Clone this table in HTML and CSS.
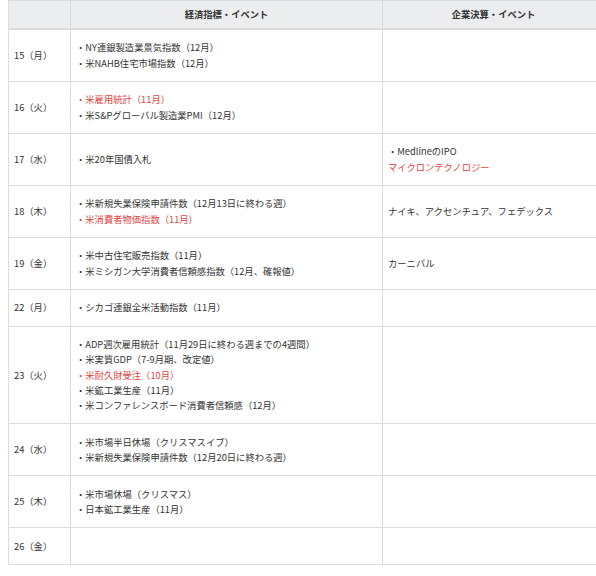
FILE: index.html
```html
<!DOCTYPE html>
<html lang="ja">
<head>
<meta charset="utf-8">
<link rel="stylesheet" href="styles.css">
</head>
<body>
<table class="cal">
  <colgroup>
    <col class="c-date">
    <col class="c-eco">
    <col class="c-corp">
  </colgroup>
  <thead>
    <tr>
      <th></th>
      <th>経済指標・イベント</th>
      <th>企業決算・イベント</th>
    </tr>
  </thead>
  <tbody>
    <tr>
      <td class="date">15（月）</td>
      <td><div>・NY連銀製造業景気指数（12月）</div><div>・米NAHB住宅市場指数（12月）</div></td>
      <td></td>
    </tr>
    <tr>
      <td class="date">16（火）</td>
      <td><div class="red">・米雇用統計（11月）</div><div>・米S&amp;Pグローバル製造業PMI（12月）</div></td>
      <td></td>
    </tr>
    <tr>
      <td class="date">17（水）</td>
      <td><div>・米20年国債入札</div></td>
      <td><div>・MedlineのIPO</div><div class="red">マイクロンテクノロジー</div></td>
    </tr>
    <tr>
      <td class="date">18（木）</td>
      <td><div>・米新規失業保険申請件数（12月13日に終わる週）</div><div class="red">・米消費者物価指数（11月）</div></td>
      <td><div>ナイキ、アクセンチュア、フェデックス</div></td>
    </tr>
    <tr>
      <td class="date">19（金）</td>
      <td><div>・米中古住宅販売指数（11月）</div><div>・米ミシガン大学消費者信頼感指数（12月、確報値）</div></td>
      <td><div>カーニバル</div></td>
    </tr>
    <tr>
      <td class="date">22（月）</td>
      <td><div>・シカゴ連銀全米活動指数（11月）</div></td>
      <td></td>
    </tr>
    <tr>
      <td class="date">23（火）</td>
      <td><div>・ADP週次雇用統計（11月29日に終わる週までの4週間）</div><div>・米実質GDP（7-9月期、改定値）</div><div class="red">・米耐久財受注（10月）</div><div>・米鉱工業生産（11月）</div><div>・米コンファレンスボード消費者信頼感（12月）</div></td>
      <td></td>
    </tr>
    <tr>
      <td class="date">24（水）</td>
      <td><div>・米市場半日休場（クリスマスイブ）</div><div>・米新規失業保険申請件数（12月20日に終わる週）</div></td>
      <td></td>
    </tr>
    <tr>
      <td class="date">25（木）</td>
      <td><div>・米市場休場（クリスマス）</div><div>・日本鉱工業生産（11月）</div></td>
      <td></td>
    </tr>
    <tr>
      <td class="date">26（金）</td>
      <td></td>
      <td></td>
    </tr>
  </tbody>
</table>
</body>
</html>
```

FILE: styles.css
```css
html {
  overflow: hidden;
}
body {
  margin: 0 0 0 8px;
  background: #fff;
  font-family: "Noto Sans CJK JP", "Noto Sans", sans-serif;
  font-size: 9.3px;
  line-height: 15.2px;
  color: #333;
}
.cal {
  width: 596px;
  border-collapse: collapse;
  table-layout: fixed;
}
.c-date { width: 62px; }
.c-eco { width: 312px; }
.c-corp { width: 222px; }
.cal th {
  background: #ecedef;
  border: 1px solid #dcdcdc;
  border-bottom: 2px solid #dcdcdc;
  height: 27px;
  padding: 0;
  font-weight: 700;
  color: #333;
  text-align: center;
  vertical-align: middle;
}
.cal td {
  border: 1px solid #dcdcdc;
  padding: 10.3px 5px;
  vertical-align: middle;
  text-align: left;
  white-space: nowrap;
}
.cal td.date {
  padding-left: 5px;
}
.red {
  color: #e2443d;
}
```
